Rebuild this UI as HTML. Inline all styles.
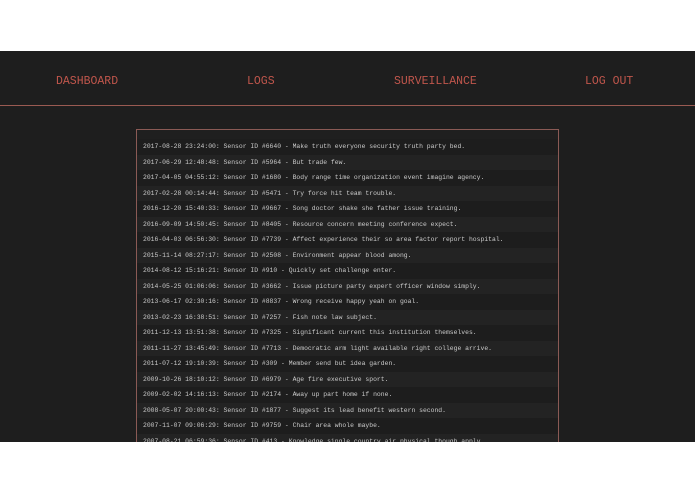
<!DOCTYPE html>
<html><head><style>
body{margin:0;width:695px;height:494px;background:#fff;overflow:hidden;position:relative;font-family:"Liberation Mono",monospace}
.dark{position:absolute;top:51px;left:0;width:695px;height:391px;background:#1e1e1e;overflow:hidden}
.nav{position:absolute;top:0;left:0;width:695px;height:54px;border-bottom:1px solid #9a5a52}
.nav span{position:absolute;top:24px;color:#c0564c;font-size:11.5px;line-height:14px;font-family:"Liberation Mono","DejaVu Sans Mono",monospace}
.box{position:absolute;top:78px;left:136px;width:421px;height:320px;border:1px solid #8a5a55;border-bottom:none;background:#1f1f1f;overflow:hidden}
.row{height:15.53px;line-height:15.53px;padding-left:6px;color:#cacaca;font-size:6.4px;white-space:nowrap}
.row:nth-child(odd){background:#232323}
.row:nth-child(even){background:#1d1d1d}
</style></head><body>
<div class="dark">
<div class="nav">
<span style="left:56px">DASHBOARD</span>
<span style="left:247px">LOGS</span>
<span style="left:394px">SURVEILLANCE</span>
<span style="left:585px">LOG OUT</span>
</div>
<div class="box"><div style="height:9px"></div>
<div class="row">2017-08-28 23:24:00: Sensor ID #6640 - Make truth everyone security truth party bed.</div>
<div class="row">2017-06-29 12:48:48: Sensor ID #5964 - But trade few.</div>
<div class="row">2017-04-05 04:55:12: Sensor ID #1680 - Body range time organization event imagine agency.</div>
<div class="row">2017-02-28 00:14:44: Sensor ID #5471 - Try force hit team trouble.</div>
<div class="row">2016-12-20 15:40:33: Sensor ID #9667 - Song doctor shake she father issue training.</div>
<div class="row">2016-09-09 14:50:45: Sensor ID #8405 - Resource concern meeting conference expect.</div>
<div class="row">2016-04-03 06:56:30: Sensor ID #7739 - Affect experience their so area factor report hospital.</div>
<div class="row">2015-11-14 08:27:17: Sensor ID #2508 - Environment appear blood among.</div>
<div class="row">2014-08-12 15:16:21: Sensor ID #910 - Quickly set challenge enter.</div>
<div class="row">2014-05-25 01:06:06: Sensor ID #3662 - Issue picture party expert officer window simply.</div>
<div class="row">2013-06-17 02:30:16: Sensor ID #8837 - Wrong receive happy yeah on goal.</div>
<div class="row">2013-02-23 16:38:51: Sensor ID #7257 - Fish note law subject.</div>
<div class="row">2011-12-13 13:51:38: Sensor ID #7325 - Significant current this institution themselves.</div>
<div class="row">2011-11-27 13:45:49: Sensor ID #7713 - Democratic arm light available right college arrive.</div>
<div class="row">2011-07-12 19:10:39: Sensor ID #309 - Member send but idea garden.</div>
<div class="row">2009-10-26 18:10:12: Sensor ID #6979 - Age fire executive sport.</div>
<div class="row">2009-02-02 14:16:13: Sensor ID #2174 - Away up part home if none.</div>
<div class="row">2008-05-07 20:00:43: Sensor ID #1877 - Suggest its lead benefit western second.</div>
<div class="row">2007-11-07 09:06:29: Sensor ID #9759 - Chair area whole maybe.</div>
<div class="row">2007-08-21 06:59:36: Sensor ID #413 - Knowledge single country air physical though apply.</div>
</div>
</div>
</body></html>
